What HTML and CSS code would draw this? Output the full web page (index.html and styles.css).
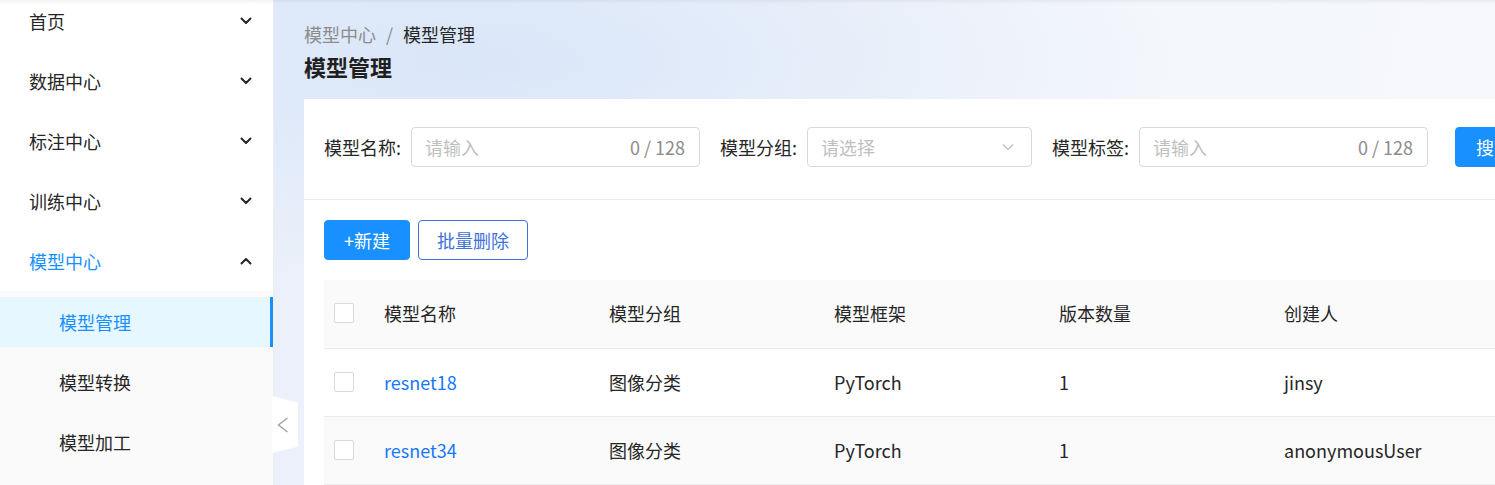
FILE: index.html
```html
<!DOCTYPE html>
<html lang="zh-CN">
<head>
<meta charset="utf-8">
<title>模型管理</title>
<link rel="stylesheet" href="styles.css">
</head>
<body>
<div class="top-shadow"></div>
<aside class="sidebar">
  <ul class="menu">
    <li class="menu-item"><span>首页</span><svg class="chev" viewBox="0 0 12 8"><path d="M1.5 1.5 L6 6 L10.5 1.5"/></svg></li>
    <li class="menu-item"><span>数据中心</span><svg class="chev" viewBox="0 0 12 8"><path d="M1.5 1.5 L6 6 L10.5 1.5"/></svg></li>
    <li class="menu-item"><span>标注中心</span><svg class="chev" viewBox="0 0 12 8"><path d="M1.5 1.5 L6 6 L10.5 1.5"/></svg></li>
    <li class="menu-item"><span>训练中心</span><svg class="chev" viewBox="0 0 12 8"><path d="M1.5 1.5 L6 6 L10.5 1.5"/></svg></li>
    <li class="menu-item open"><span>模型中心</span><svg class="chev" viewBox="0 0 12 8"><path d="M1.5 6.5 L6 2 L10.5 6.5"/></svg></li>
  </ul>
  <ul class="submenu">
    <li class="sub-item active">模型管理</li>
    <li class="sub-item">模型转换</li>
    <li class="sub-item">模型加工</li>
  </ul>
</aside>
<div class="collapse-tab"><svg viewBox="0 0 12 16"><path d="M10.5 1 L1.5 8 L10.5 15"/></svg></div>
<main class="main">
  <div class="breadcrumb"><span class="crumb-prev">模型中心</span><span class="crumb-sep">/</span><span class="crumb-cur">模型管理</span></div>
  <h1 class="title">模型管理</h1>
  <section class="card">
    <div class="filters">
      <div class="field">
        <label class="label">模型名称:</label>
        <div class="input"><span class="ph">请输入</span><span class="count">0 / 128</span></div>
      </div>
      <div class="field">
        <label class="label">模型分组:</label>
        <div class="input select"><span class="ph">请选择</span><svg class="sel-arrow" viewBox="0 0 12 8"><path d="M1 1.5 L6 6.5 L11 1.5"/></svg></div>
      </div>
      <div class="field">
        <label class="label">模型标签:</label>
        <div class="input"><span class="ph">请输入</span><span class="count">0 / 128</span></div>
      </div>
      <button class="btn btn-primary search">搜索</button>
    </div>
    <div class="toolbar">
      <button class="btn btn-primary">+新建</button>
      <button class="btn btn-outline">批量删除</button>
    </div>
    <table class="table">
      <colgroup><col class="c-check"><col class="c"><col class="c"><col class="c"><col class="c"><col class="c"></colgroup>
      <thead>
        <tr><th><span class="checkbox"></span></th><th>模型名称</th><th>模型分组</th><th>模型框架</th><th>版本数量</th><th>创建人</th></tr>
      </thead>
      <tbody>
        <tr><td><span class="checkbox"></span></td><td><a class="link">resnet18</a></td><td>图像分类</td><td>PyTorch</td><td>1</td><td>jinsy</td></tr>
        <tr class="hover"><td><span class="checkbox"></span></td><td><a class="link">resnet34</a></td><td>图像分类</td><td>PyTorch</td><td>1</td><td>anonymousUser</td></tr>
      </tbody>
    </table>
  </section>
</main>
</body>
</html>
```
FILE: styles.css
```css
* { box-sizing: border-box; }
html, body { margin: 0; padding: 0; }
body {
  width: 1495px;
  height: 485px;
  overflow: hidden;
  display: flex;
  font-family: "Noto Sans CJK SC", "Noto Sans", sans-serif;
  font-size: 18px;
  color: #262626;
  position: relative;
}
.top-shadow {
  position: absolute;
  left: 0; right: 0; top: 0;
  height: 4px;
  background: linear-gradient(rgba(0,0,0,0.05), rgba(0,0,0,0));
  z-index: 5;
  pointer-events: none;
}
.sidebar {
  width: 274px;
  flex-shrink: 0;
  background: #fafafa;
  border-right: 1px solid #eeeeee;
  display: flex;
  flex-direction: column;
}
.menu, .submenu { list-style: none; margin: 0; padding: 0; }
.menu { background: #fff; margin-top: -9px; }
.menu-item {
  height: 60px;
  padding: 0 21px 0 29px;
  display: flex;
  align-items: center;
  justify-content: space-between;
}
.menu-item.open { color: #1890ff; }
.chev { width: 12px; height: 8px; }
.chev path { fill: none; stroke: #262626; stroke-width: 2; stroke-linecap: round; stroke-linejoin: round; }
.submenu { background: #fafafa; padding-top: 6px; }
.sub-item {
  height: 50px;
  margin-bottom: 10px;
  padding-left: 59px;
  display: flex;
  align-items: center;
  padding-bottom: 1px;
}
.sub-item.active {
  background: #e6f7ff;
  color: #1890ff;
  border-right: 3px solid #1890ff;
}
.collapse-tab {
  position: absolute;
  left: 272px;
  top: 396px;
  width: 26px;
  height: 57px;
  background: #fff;
  clip-path: polygon(0 0, 100% 12%, 100% 89%, 0 100%);
  display: flex;
  align-items: center;
  justify-content: center;
  padding-right: 4px;
  z-index: 4;
}
.collapse-tab svg { width: 12px; height: 16px; }
.collapse-tab path { fill: none; stroke: #a0a0a0; stroke-width: 1.4; }
.main {
  flex: 1;
  min-width: 0;
  overflow: hidden;
  padding: 22px 0 0 30px;
  background:
    radial-gradient(ellipse 700px 220px at 200px 60px, rgba(214,228,248,0.85), rgba(214,228,248,0)),
    linear-gradient(100deg, #eaf0fa 0%, #f3f6fb 50%, #f6f8fc 100%);
}
.breadcrumb { height: 24px; line-height: 24px; display: flex; }
.crumb-prev { color: #8c8c8c; }
.crumb-sep { color: #8c8c8c; margin: 0 10px; }
.crumb-cur { color: #262626; }
.title {
  margin: 5px 0 0;
  height: 30px;
  line-height: 30px;
  font-size: 22px;
  font-weight: 700;
  color: #1f1f1f;
}
.card {
  margin-top: 18px;
  width: 1420px;
  background: #fff;
  height: 400px;
}
.filters {
  display: flex;
  align-items: center;
  padding: 28px 20px 33px;
  border-bottom: 1px solid #ebebeb;
  height: 101px;
}
.field { display: flex; align-items: center; margin-right: 20px; }
.label { width: 87px; white-space: nowrap; }
.input {
  width: 289px;
  height: 40px;
  border: 1px solid #d9d9d9;
  border-radius: 4px;
  padding: 0 14px 0 13px;
  display: flex;
  align-items: center;
  justify-content: space-between;
}
.input.select { width: 225px; }
.ph { color: #bfbfbf; }
.count { color: #8c8c8c; }
.sel-arrow { width: 12px; height: 8px; margin-right: 3px; }
.sel-arrow path { fill: none; stroke: #bfbfbf; stroke-width: 1.3; }
.btn {
  height: 40px;
  border-radius: 4px;
  font-family: inherit;
  font-size: 18px;
  cursor: pointer;
  flex-shrink: 0;
}
.btn-primary { background: #1890ff; border: 1px solid #1890ff; color: #fff; padding: 0 19px; }
.btn-outline { background: #fff; border: 1px solid #3f72d9; color: #3f72d9; padding: 0 18px; margin-left: 8px; }
.search { margin-left: 7px; padding: 0 20px; }
.toolbar { padding: 20px 20px; display: flex; height: 80px; }
.table {
  margin: 0 20px;
  border-collapse: collapse;
  table-layout: fixed;
  width: 1185px;
}
.c-check { width: 60px; }
.c { width: 225px; }
.table th, .table td {
  height: 68px;
  padding: 0 0 1px;
  text-align: left;
  font-weight: 400;
  border-bottom: 1px solid #ebebeb;
  vertical-align: middle;
  white-space: nowrap;
}
.table thead th { background: #fafafa; }
.table th:first-child, .table td:first-child { padding-left: 10px; }
.table tr.hover td { background: #fafafa; }
.checkbox {
  display: block;
  width: 20px;
  height: 20px;
  border: 1px solid #d9d9d9;
  border-radius: 2px;
  background: #fff;
}
.link { color: #1677ff; text-decoration: none; }
```
